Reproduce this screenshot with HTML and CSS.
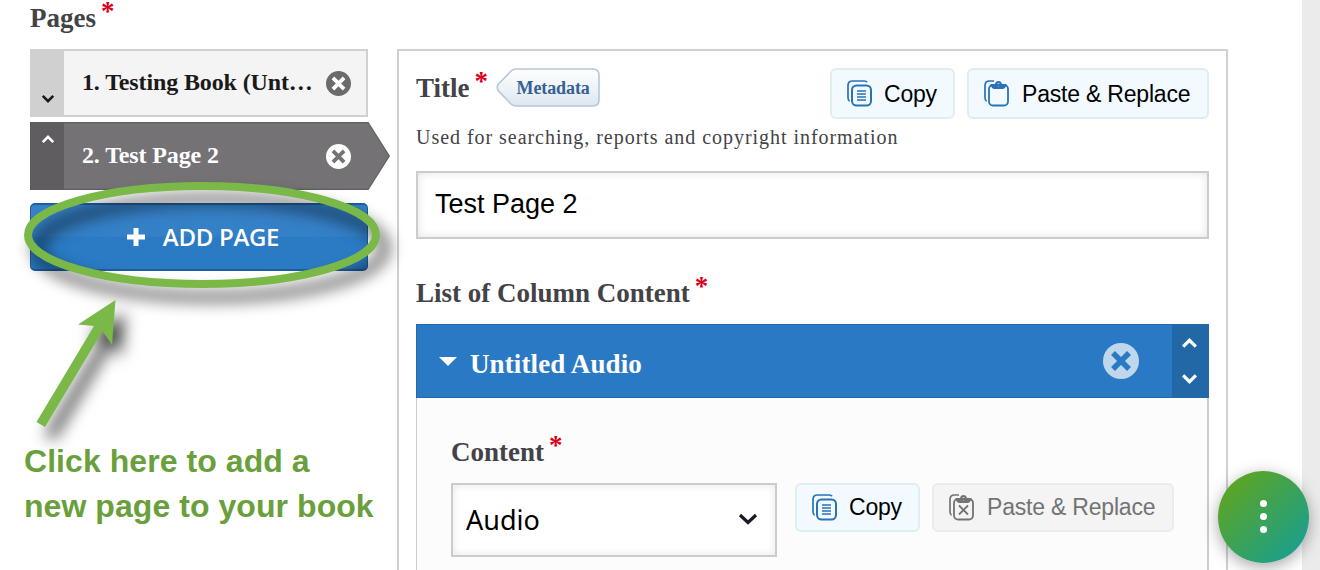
FILE: index.html
```html
<!DOCTYPE html>
<html lang="en">
<head>
<meta charset="utf-8">
<title>Edit pages</title>
<link rel="stylesheet" href="styles.css">
</head>
<body>
<svg class="sprite" width="0" height="0">
  <symbol id="copy" viewBox="0 0 26 27">
    <path d="M20 2.300C19.500 1.500 18.500 1 17.500 1H5.500Q1 1 1 5.500V17.500C1 19.500 1.500 20.700 2.600 21.200" fill="none" stroke="currentColor" stroke-width="1.700"/>
    <rect x="5" y="5.500" width="19" height="20" rx="4.500" fill="none" stroke="currentColor" stroke-width="2"/>
    <path d="M10 11h9M10 14h9M10 17h9M10 20h9" stroke="currentColor" stroke-width="1.300"/>
  </symbol>
  <symbol id="paste" viewBox="0 0 26 27">
    <path d="M10 1H5.500Q1 1 1 5.500V17.500C1 19.500 1.500 20.700 2.600 21.200" fill="none" stroke="currentColor" stroke-width="1.700"/>
    <rect x="5" y="5" width="19" height="20.500" rx="4" fill="none" stroke="currentColor" stroke-width="1.800"/>
    <path fill-rule="evenodd" fill="currentColor" d="M6.500 4H11C11.500 2 12.500 1 14.500 1S17.500 2 18 4H22.500C22 7.500 20.500 9 18.500 9H10.500C8.500 9 7 7.500 6.500 4ZM14.500 3.200a1.600 1.600 0 1 0 .01 0Z"/>
  </symbol>
  <symbol id="chevron" viewBox="0 0 16 10"><path d="M2 2l6 6 6-6" fill="none" stroke="currentColor" stroke-width="3"/></symbol>
  <symbol id="cross" viewBox="0 0 36 36">
    <circle cx="18" cy="18" r="18" fill="currentColor"/>
    <path d="M10 10L26 26M26 10L10 26" class="cross-mark" stroke-width="5.500"/>
  </symbol>
</svg>

<div class="page">
  <aside class="sidebar">
    <h2 class="label label-pages">Pages<span class="req">*</span></h2>
    <div class="tab">
      <div class="tab-handle"><svg class="chev"><use href="#chevron"/></svg></div>
      <div class="tab-title">1. Testing Book (Unt…</div>
      <svg class="tab-close"><use href="#cross"/></svg>
    </div>
    <div class="tab tab-active">
      <svg class="tab-shape" viewBox="0 0 361 68"><path d="M0 0H338.500L360 34L338.500 68H0Z" fill="#5f5d60"/><path d="M34 1.200H338L358.700 34L338 66.800H34Z" fill="#747275"/></svg>
      <div class="tab-handle"><svg class="chev flip"><use href="#chevron"/></svg></div>
      <div class="tab-title">2. Test Page 2</div>
      <svg class="tab-close"><use href="#cross"/></svg>
    </div>
    <button class="add"><svg class="plus" viewBox="0 0 18 18"><path d="M9 0v18M0 9h18" stroke="#fff" stroke-width="5"/></svg><span>ADD PAGE</span></button>
    <p class="hint">Click here to add a<br>new page to your book</p>
  </aside>

  <main class="panel">
    <div class="title-row">
      <h2 class="label">Title<span class="req">*</span></h2>
      <div class="meta">
        <svg class="meta-shape" viewBox="0 0 104 39"><defs><linearGradient id="mg" x2="0" y2="1"><stop offset="0" stop-color="#fff"/><stop offset="1" stop-color="#dde7ef"/></linearGradient></defs><path d="M20 1H97Q103 1 103 7V32Q103 38 97 38H20Q17 38 15 36L2.500 23Q0 19.500 2.500 16L15 3Q17 1 20 1Z" fill="url(#mg)" stroke="#b3c8dc" stroke-width="1.600"/></svg>
        <span class="meta-text">Metadata</span>
      </div>
      <div class="actions">
        <button class="btn btn-copy"><svg class="ico"><use href="#copy"/></svg><span>Copy</span></button>
        <button class="btn btn-paste"><svg class="ico"><use href="#paste"/></svg><span>Paste &amp; Replace</span></button>
      </div>
    </div>
    <p class="desc">Used for searching, reports and copyright information</p>
    <div class="field">Test Page 2</div>
    <h2 class="label label-list">List of Column Content<span class="req">*</span></h2>
    <section class="item">
      <header class="item-head">
        <span class="caret"></span>
        <h3 class="item-title">Untitled Audio</h3>
        <svg class="item-close"><use href="#cross"/></svg>
        <div class="item-handle"><svg class="chev flip"><use href="#chevron"/></svg><svg class="chev"><use href="#chevron"/></svg></div>
      </header>
      <div class="item-body">
        <h2 class="label">Content<span class="req">*</span></h2>
        <div class="content-row">
          <div class="select"><span>Audio</span><svg class="select-chev" viewBox="0 0 20 12"><path d="M2 2l8 7.500L18 2" fill="none" stroke="#181c22" stroke-width="3.200"/></svg></div>
          <button class="btn btn-copy"><svg class="ico"><use href="#copy"/></svg><span>Copy</span></button>
          <button class="btn btn-paste btn-off"><svg class="ico" viewBox="0 0 26 27"><use href="#paste" width="26" height="27"/><path d="M10 11.500l9 9M19 11.500l-9 9" stroke="currentColor" stroke-width="1.800"/></svg><span>Paste &amp; Replace</span></button>
        </div>
      </div>
    </section>
  </main>
  <div class="gutter"></div>
</div>

<svg class="marks" viewBox="0 0 420 450">
  <ellipse cx="202" cy="235" rx="174" ry="49" fill="none" stroke="#7ab948" stroke-width="8"/>
  <path d="M115.500 300L112 345L102.500 331L45 427L36.500 422L94 326L78 324.500Z" fill="#7ab948"/>
</svg>
<button class="fab"><i></i><i></i><i></i></button>
</body>
</html>
```
FILE: styles.css
```css
* { box-sizing: border-box; margin: 0; padding: 0; }
body { width: 1320px; height: 570px; overflow: hidden; background: #fff; font-family: "Liberation Sans", Arial, sans-serif; }
button { font: inherit; border: 0; }
.sprite { position: absolute; }
.page { display: flex; height: 570px; overflow: hidden; }

.label { font: bold 27px/32px "Liberation Serif", "Times New Roman", serif; color: #434246; white-space: nowrap; }
.req { display: inline-block; width: 13px; height: 32px; line-height: 18px; color: #d9001b; margin-left: 5px; font-size: 27px; vertical-align: top; }

.sidebar { width: 397px; padding: 2px 0 0 30px; flex: none; }
.label-pages { margin-bottom: 15px; }
.tab { width: 338px; height: 68px; display: flex; align-items: center; background: #f4f4f4; border: 2px solid #d0d0d0; border-left: 0; position: relative; margin-bottom: 5px; }
.tab-handle { width: 34px; height: 64px; background: #d0d0d0; color: #181818; display: flex; align-items: flex-end; justify-content: center; padding: 0 0 12px 2px; }
.chev { width: 14px; height: 9px; display: block; }
.flip { transform: scaleY(-1); }
.tab-title { font: bold 24px/30px "Liberation Serif", "Times New Roman", serif; letter-spacing: -.13px; color: #1a1a1a; width: 245px; padding: 0 0 2px 18px; white-space: nowrap; }
.tab-close { width: 25px; height: 25px; margin-left: 17px; color: #6b6b6d; }
.tab-close, .item-close { flex: none; }
.cross-mark { stroke: var(--mark, #fff); }
.tab-active { background: none; border-color: transparent; margin-bottom: 13px; --mark: #747275; }
.tab-active .tab-handle, .tab-active .tab-title, .tab-active .tab-close { position: relative; color: #fff; }
.tab-shape { position: absolute; left: 0; top: -2px; width: 361px; height: 68px; }
.tab-active .tab-handle { background: none; align-items: flex-start; padding: 11px 0 0 2px; }
.add { display: flex; align-items: center; justify-content: center; gap: 18px; width: 338px; height: 68px; padding-left: 8px; border-radius: 5px; border: 1px solid #1c5f9e; border-width: 2px 1px; background: linear-gradient(#3782c8, #3380c7 49%, #2a7ac4 50%, #2a7ac4); color: #fff; font: 600 24px/30px "Open Sans", sans-serif; letter-spacing: -.3px; }
.plus { width: 18px; height: 18px; }
.hint { font-weight: bold; font-size: 32px; line-height: 45px; letter-spacing: .06px; color: #6aa03c; margin: 168px 0 0 -6px; white-space: nowrap; }

.panel { width: 831px; height: 540px; margin-top: 49px; flex: none; border: 2px solid #d0d0d0; border-bottom: 0; padding: 17px 17px 0; }
.title-row { display: flex; height: 51px; }
.title-row > .label { padding-top: 4px; }
.meta { position: relative; width: 104px; height: 39px; margin-left: 8px; }
.meta-shape { position: absolute; left: 0; top: 0; width: 104px; height: 39px; }
.meta-text { position: relative; display: block; padding-left: 21px; font: bold 18px/40px "Liberation Serif", serif; letter-spacing: -.1px; color: #356196; }
.actions { display: flex; gap: 12px; margin-left: auto; }
.btn { height: 51px; display: flex; align-items: center; gap: 12px; padding-left: 15px; border: 2px solid #dfefee; border-radius: 6px; background: #f2faff; font-size: 23px; color: #000; white-space: nowrap; }
.btn span { padding-top: 1px; letter-spacing: -.2px; }
.btn-copy { width: 125px; gap: 11px; }
.btn-paste { width: 242px; }
.ico { width: 26px; height: 27px; color: #2872b7; flex: none; }
.desc { font: 20px/26px "Liberation Serif", serif; letter-spacing: .96px; color: #434246; margin-top: 5px; white-space: nowrap; }
.field { height: 68px; margin-top: 21px; border: 2px solid #ccc; box-shadow: inset 0 0 10px #e4e4e4; font-size: 27px; line-height: 62px; padding-left: 17px; }
.label-list { margin-top: 38px; }
.item { margin-top: 15px; }
.item-head { height: 74px; display: flex; align-items: center; background: #2a79c4; border: 1px solid #2368a8; border-right: 0; color: #fff; }
.caret { border: 9px solid transparent; border-top-color: #fff; border-bottom: 0; margin: 0 13px 0 22px; }
.item-title { font: bold 27px/32px "Liberation Serif", serif; letter-spacing: .12px; padding-top: 6px; }
.item-close { width: 36px; height: 36px; margin-left: auto; margin-right: 33px; color: #bfd7ed; --mark: #2a79c4; }
.item-handle { width: 37px; height: 74px; background: #2368a6; display: flex; flex-direction: column; align-items: center; justify-content: center; gap: 24px; padding: 0 2px 1px 0; }
.item-handle .chev { width: 17px; height: 11px; }
.item-body { height: 200px; padding: 38px 0 0 34px; background: #fcfcfc; border: 1px solid #ccc; border-width: 0 2px 0 1px; }
.content-row { display: flex; margin-top: 15px; }
.select { width: 326px; height: 74px; display: flex; align-items: center; justify-content: space-between; padding: 0 18px 0 13px; margin-right: 18px; border: 2px solid #ccc; box-shadow: inset 0 0 10px #e8e8e8; background: #fff; font: 27px/40px "Noto Sans", sans-serif; }
.select-chev { width: 20px; height: 12px; margin: 0 -1px 2px 0; }
.content-row .btn { height: 49px; }
.content-row .btn span { padding-top: 0; }
.content-row .btn-copy { margin-right: 12px; }
.btn-off { background: #f4f4f4; border-color: #ebebeb; color: #737373; }
.btn-off .ico { color: #737373; }
.gutter { width: 18px; margin-left: auto; background: #ebebeb; }

.marks { position: absolute; left: 0; top: 0; width: 420px; height: 450px; filter: drop-shadow(9px 13px 8px rgba(0,0,0,.75)); pointer-events: none; }
.fab { position: absolute; left: 1217.5px; top: 471px; width: 91.5px; height: 91.5px; border-radius: 50%; background: linear-gradient(135deg, #5ea51f 10%, #1a9f8e 90%); box-shadow: 0 4px 16px rgba(0,0,0,.35); display: flex; flex-direction: column; align-items: center; justify-content: center; gap: 6px; }
.fab i { width: 7px; height: 7px; border-radius: 50%; background: #fff; }
```
